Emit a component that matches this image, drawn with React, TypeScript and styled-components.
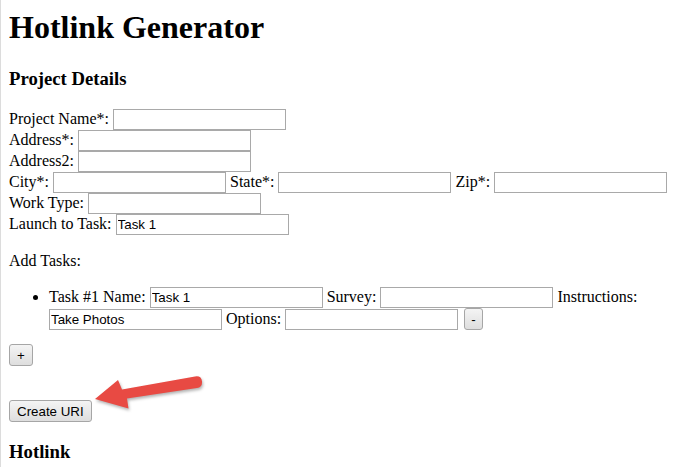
import styled, { createGlobalStyle } from "styled-components";

const GlobalStyle = createGlobalStyle`
    html, body {
        margin: 0;
        background: #ffffff;
    }
    body {
        min-height: 100vh;
        box-sizing: border-box;
        padding: 9px 8px 8px 8px;
        border-left: 1px solid #dcdcdc;
        font-family: "Liberation Serif", "Times New Roman", serif;
        font-size: 16px;
        color: #000000;
        position: relative;
    }
`;

const Title = styled.h1`
    font-family: "Liberation Serif", "Times New Roman", serif;
    font-size: 32px;
    font-weight: bold;
    margin: 0 0 22px 0;
`;

const SectionTitle = styled.h3<{ $top?: number }>`
    font-family: "Liberation Serif", "Times New Roman", serif;
    font-size: 18.72px;
    font-weight: bold;
    margin: ${(p) => p.$top || 0}px 0 19px 0;
`;

const Form = styled.div`
    display: flex;
    flex-direction: column;
`;

const FieldRow = styled.div`
    display: flex;
    flex-direction: row;
    align-items: baseline;
    column-gap: 4px;
    height: 21px;
`;

const Label = styled.span`
    white-space: nowrap;
`;

const TextInput = styled.input`
    box-sizing: border-box;
    width: 173px;
    height: 21px;
    margin: 0;
    padding: 1px 1px;
    border: 1px solid #a9a9a9;
    font-family: "Liberation Sans", Arial, sans-serif;
    font-size: 13.33px;
    color: #000000;
    background: #ffffff;
    outline: none;
`;

const Caption = styled.div`
    margin-top: 17px;
`;

const TaskList = styled.ul`
    margin: 17px 0 14px 0;
    padding-left: 40px;
    list-style: disc;
`;

const TaskLine = styled.div`
    display: flex;
    flex-wrap: wrap;
    align-items: baseline;
    column-gap: 4px;
`;

const Button = styled.button`
    box-sizing: border-box;
    height: 22px;
    margin: 0;
    padding: 1px 7px;
    border: 1px solid #a6a6a6;
    border-radius: 3px;
    background: linear-gradient(#f4f4f4, #dedede);
    font-family: "Liberation Sans", Arial, sans-serif;
    font-size: 13.33px;
    color: #000000;
    cursor: pointer;
`;

const SmallButton = styled(Button)`
    padding: 1px 6px;
    margin-left: 2px;
`;

const ButtonRow = styled.div<{ $gap: number }>`
    display: flex;
    margin-bottom: ${(p) => p.$gap}px;
`;

const Arrow = styled.svg`
    position: absolute;
    left: 85px;
    top: 365px;
    width: 130px;
    height: 55px;
    overflow: visible;
    filter: drop-shadow(1px 2px 1.5px rgba(0, 0, 0, 0.3));
`;

const App = () => {
    return (
        <>
            <GlobalStyle />
            <Title>Hotlink Generator</Title>
            <SectionTitle>Project Details</SectionTitle>
            <Form>
                <FieldRow>
                    <Label>Project Name*:</Label>
                    <TextInput type="text" />
                </FieldRow>
                <FieldRow>
                    <Label>Address*:</Label>
                    <TextInput type="text" />
                </FieldRow>
                <FieldRow>
                    <Label>Address2:</Label>
                    <TextInput type="text" />
                </FieldRow>
                <FieldRow>
                    <Label>City*:</Label>
                    <TextInput type="text" />
                    <Label>State*:</Label>
                    <TextInput type="text" />
                    <Label>Zip*:</Label>
                    <TextInput type="text" />
                </FieldRow>
                <FieldRow>
                    <Label>Work Type:</Label>
                    <TextInput type="text" />
                </FieldRow>
                <FieldRow>
                    <Label>Launch to Task:</Label>
                    <TextInput type="text" defaultValue="Task 1" />
                </FieldRow>
            </Form>
            <Caption>Add Tasks:</Caption>
            <TaskList>
                <li>
                    <TaskLine>
                        <Label>Task #1 Name:</Label>
                        <TextInput type="text" defaultValue="Task 1" />
                        <Label>Survey:</Label>
                        <TextInput type="text" />
                        <Label>Instructions:</Label>
                        <TextInput type="text" defaultValue="Take Photos" />
                        <Label>Options:</Label>
                        <TextInput type="text" />
                        <SmallButton>-</SmallButton>
                    </TaskLine>
                </li>
            </TaskList>
            <ButtonRow $gap={34}>
                <Button>+</Button>
            </ButtonRow>
            <ButtonRow $gap={0}>
                <Button>Create URI</Button>
            </ButtonRow>
            <SectionTitle $top={19}>Hotlink</SectionTitle>
            <Arrow viewBox="85 365 130 55">
                <path
                    d="M94,399 L117,380 L121,389.5 L194,376.5 Q200.5,375.5 201,381.5 Q201.5,387 196,388 L126,398.5 L127.5,408.5 Z"
                    fill="#e84a43"
                />
            </Arrow>
        </>
    );
};

export default App;
